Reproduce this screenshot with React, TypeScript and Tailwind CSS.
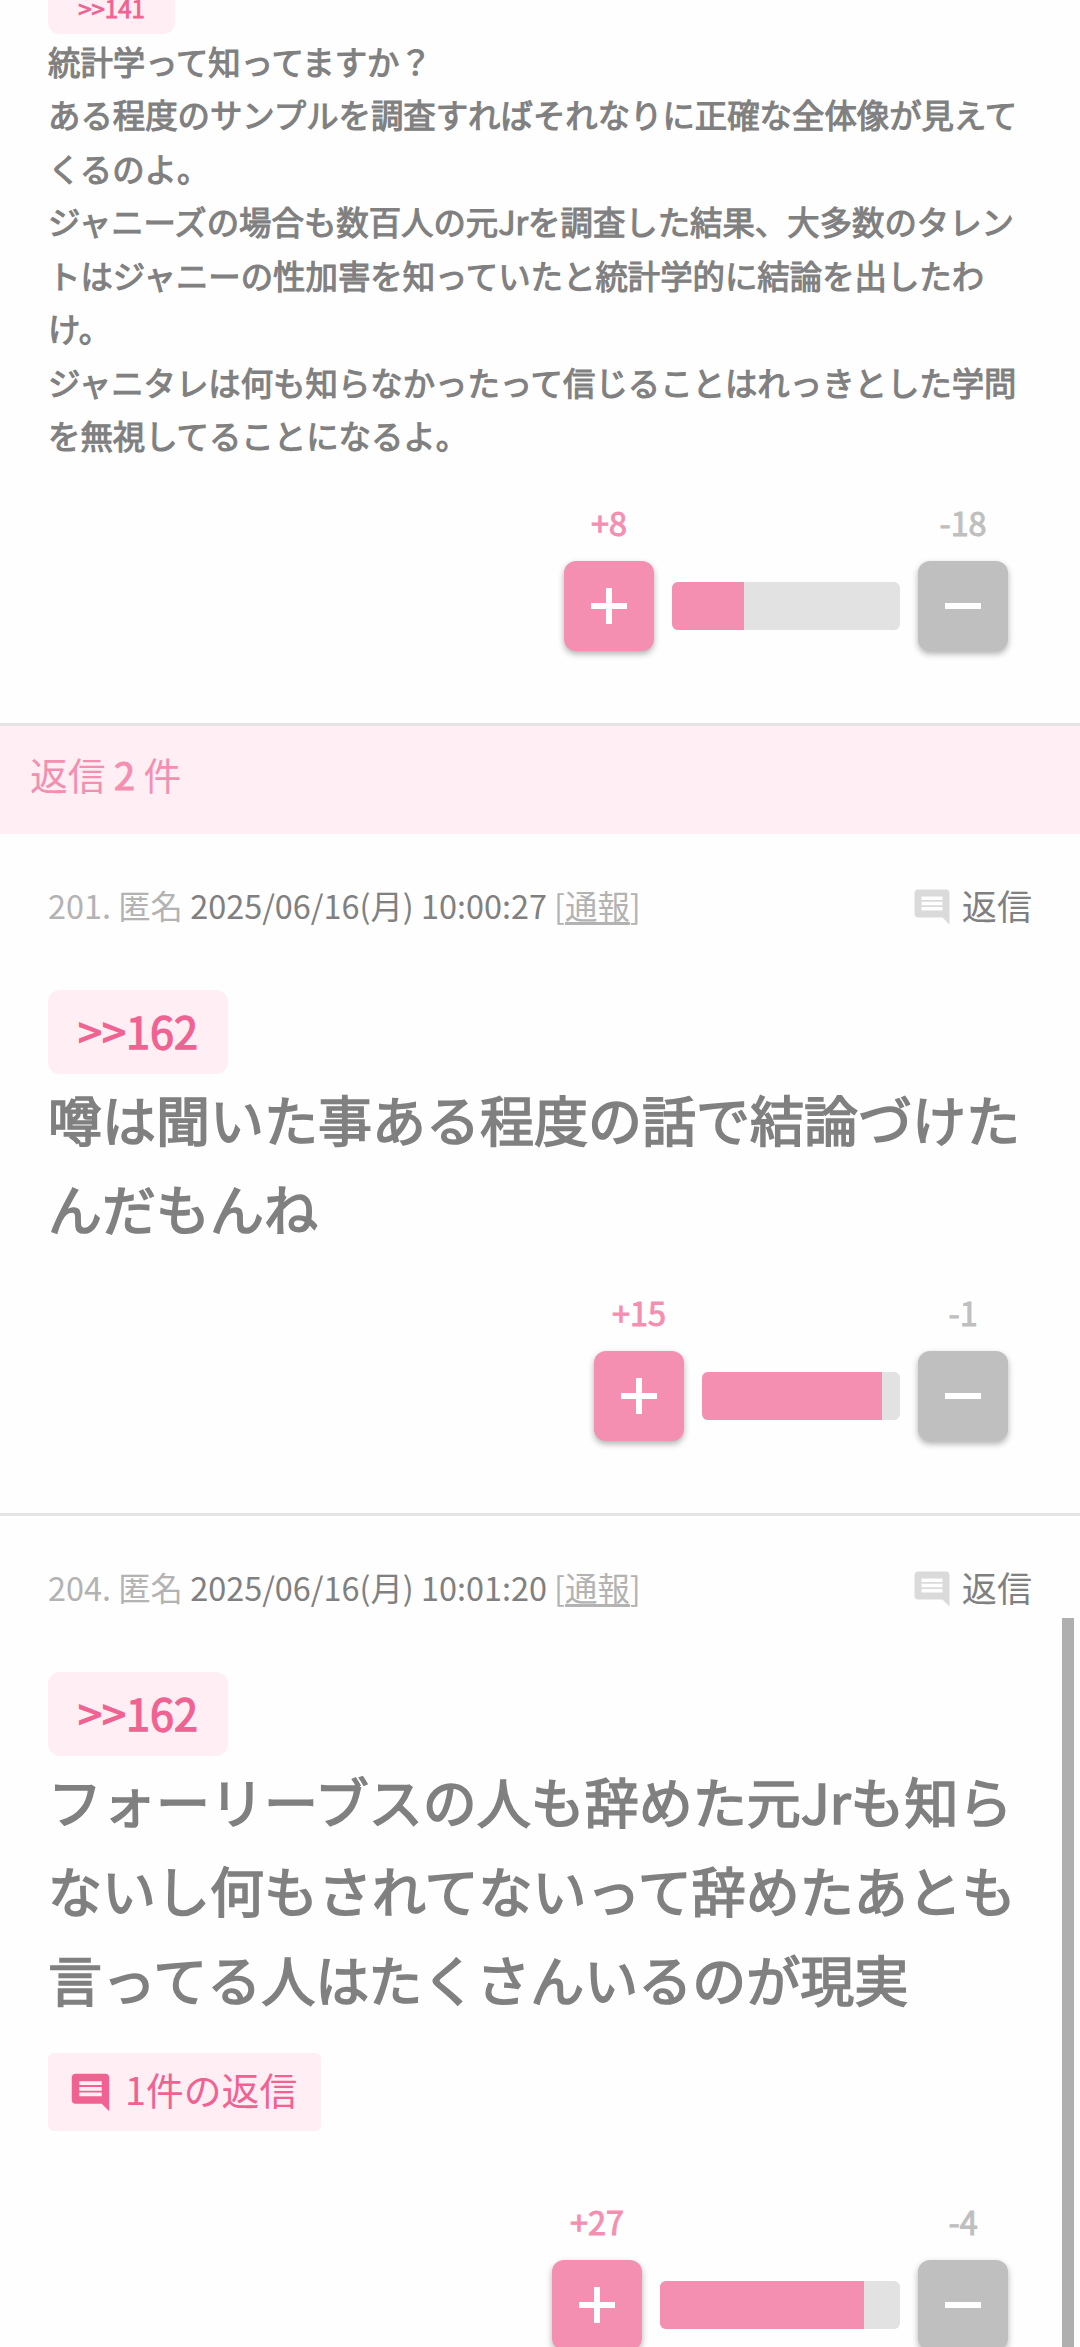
import { MdComment } from "react-icons/md";

interface VoteData {
  plus: number;
  minus: number;
  barWidth: number;
  plusWidth: number;
}

interface Comment {
  id: number;
  date: string;
  anchor: string;
  lines: string[];
  replies?: number;
  votes: VoteData;
}

const parentLines = [
  "統計学って知ってますか？",
  "ある程度のサンプルを調査すればそれなりに正確な全体像が見えて",
  "くるのよ。",
  "ジャニーズの場合も数百人の元Jrを調査した結果、大多数のタレン",
  "トはジャニーの性加害を知っていたと統計学的に結論を出したわ",
  "け。",
  "ジャニタレは何も知らなかったって信じることはれっきとした学問",
  "を無視してることになるよ。",
];

const comments: Comment[] = [
  {
    id: 201,
    date: "2025/06/16(月) 10:00:27",
    anchor: ">>162",
    lines: ["噂は聞いた事ある程度の話で結論づけた", "んだもんね"],
    votes: { plus: 15, minus: 1, barWidth: 198, plusWidth: 180 },
  },
  {
    id: 204,
    date: "2025/06/16(月) 10:01:20",
    anchor: ">>162",
    lines: [
      "フォーリーブスの人も辞めた元Jrも知ら",
      "ないし何もされてないって辞めたあとも",
      "言ってる人はたくさんいるのが現実",
    ],
    replies: 1,
    votes: { plus: 27, minus: 4, barWidth: 240, plusWidth: 204 },
  },
];

function Votes({ plus, minus, barWidth, plusWidth }: VoteData) {
  return (
    <div className="mr-[72px] flex items-end justify-end gap-[18px] pb-[72px]">
      <div className="flex w-[90px] flex-col items-center">
        <span className="mb-3 text-[32.4px] leading-[54px] text-[#f48fb1] [-webkit-text-stroke:1px_#f48fb1]">
          +{plus}
        </span>
        <button className="flex h-[90px] w-[90px] items-center justify-center rounded-xl bg-[#f48fb1] shadow-[0_3px_6px_rgba(0,0,0,0.3)]">
          <svg className="h-9 w-9" viewBox="0 0 36 36" fill="#fff">
            <path d="M15 0h6v15h15v6H21v15h-6V21H0v-6h15z" />
          </svg>
        </button>
      </div>
      <div
        className="mb-[21px] h-12 overflow-hidden rounded-md bg-[#e2e2e2]"
        style={{ width: barWidth }}
      >
        <div className="h-full bg-[#f48fb1]" style={{ width: plusWidth }} />
      </div>
      <div className="flex w-[90px] flex-col items-center">
        <span className="mb-3 text-[32.4px] leading-[54px] text-[#bfbfbf] [-webkit-text-stroke:1px_#bfbfbf]">
          -{minus}
        </span>
        <button className="flex h-[90px] w-[90px] items-center justify-center rounded-xl bg-[#bfbfbf] shadow-[0_3px_6px_rgba(0,0,0,0.3)]">
          <svg className="h-9 w-9" viewBox="0 0 36 36" fill="#fff">
            <path d="M0 15h36v6H0z" />
          </svg>
        </button>
      </div>
    </div>
  );
}

function CommentItem({ comment }: { comment: Comment }) {
  return (
    <article className="border-b-[3px] border-[#e4e4e4]">
      <header className="flex h-[156px] items-start justify-between px-12 pt-[46px]">
        <p className="text-[32.4px] leading-[50px] text-[#b3b3b3]">
          {comment.id}. 匿名 <span className="text-[#808080]">{comment.date}</span> [
          <a className="underline decoration-[3px] underline-offset-[3px]">通報</a>]
        </p>
        <a className="flex items-center gap-[9px] text-[35.1px] leading-[50px] text-[#808080]">
          <MdComment className="mt-1 h-[42px] w-[42px] text-[#dadada]" />
          返信
        </a>
      </header>

      <div className="pl-12">
        <a className="flex h-[84px] w-[180px] items-center justify-center rounded-xl bg-[#ffeff4] pb-0.5 text-[43.2px] leading-[71px] text-[#f06292] [-webkit-text-stroke:1.35px_#f06292]">
          {comment.anchor}
        </a>
        <div className="text-[54px] leading-[89.1px] whitespace-nowrap text-[#808080] [-webkit-text-stroke:1.7px_#808080]">
          {comment.lines.map((line) => (
            <p key={line}>{line}</p>
          ))}
        </div>
        {comment.replies && (
          <a className="mt-[30px] flex h-[78px] w-[273px] items-center gap-3 rounded-md bg-[#ffeff4] pl-[20px] text-[37.8px] leading-[60px] whitespace-nowrap text-[#f06292]">
            <MdComment className="h-[45px] w-[45px] shrink-0" />
            <span className="mb-1.5">{comment.replies}件の返信</span>
          </a>
        )}
      </div>

      <div className={comment.replies ? "pt-[63px]" : "pt-[33px]"}>
        <Votes {...comment.votes} />
      </div>
    </article>
  );
}

export default function App() {
  return (
    <main
      lang="ja"
      className="relative h-[2347px] w-[1080px] overflow-hidden bg-[#fefefe] font-['Noto_Sans_CJK_JP',sans-serif]"
    >
      <article className="border-b-[3px] border-[#e4e4e4]">
        <div className="pl-12">
          {/* Top of this anchor is scrolled out of view */}
          <a className="flex h-[34px] w-[127px] items-end justify-center rounded-b-xl bg-[#ffeff4] pb-[6px] text-[24px] leading-[40px] text-[#f06292] [-webkit-text-stroke:0.85px_#f06292]">
            &gt;&gt;141
          </a>
          <div className="text-[32.4px] leading-[53.46px] whitespace-nowrap text-[#808080] [-webkit-text-stroke:1.1px_#808080]">
            {parentLines.map((line) => (
              <p key={line}>{line}</p>
            ))}
          </div>
        </div>
        <div className="pt-[33px]">
          <Votes plus={8} minus={18} barWidth={228} plusWidth={72} />
        </div>
      </article>

      <h2 className="h-[108px] bg-[#ffeff4] pl-[30px] text-[37.8px] leading-[96px] text-[#f48fb1]">
        返信 <span className="[-webkit-text-stroke:1.2px_#f48fb1]">2</span> 件
      </h2>

      {comments.map((comment) => (
        <CommentItem key={comment.id} comment={comment} />
      ))}

      {/* Scroll thumb */}
      <div className="absolute top-[1618px] right-1.5 h-[729px] w-3 bg-[#afafaf]" />
    </main>
  );
}
